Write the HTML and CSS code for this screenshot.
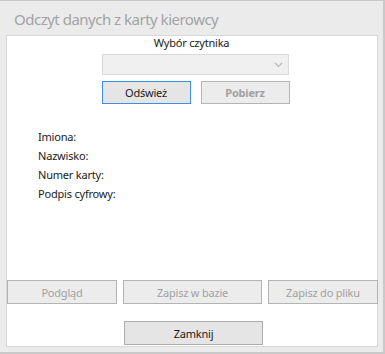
FILE: index.html
```html
<!DOCTYPE html>
<html lang="pl">
<head>
<meta charset="utf-8">
<link rel="stylesheet" href="styles.css">
</head>
<body>
<div class="window">
  <div class="title">Odczyt danych z karty kierowcy</div>
  <div class="panel">
    <div class="reader">
      <div class="reader-label">Wybór czytnika</div>
      <div class="select">
        <svg class="chevron" width="9" height="6" viewBox="0 0 9 6"><path d="M1 1 L4.5 4.5 L8 1" fill="none" stroke="#b8b8b8" stroke-width="1.2"/></svg>
      </div>
      <div class="reader-buttons">
        <button class="btn btn-focus">Odśwież</button>
        <button class="btn btn-disabled btn-bold">Pobierz</button>
      </div>
    </div>
    <div class="fields">
      <div class="field">Imiona:</div>
      <div class="field">Nazwisko:</div>
      <div class="field">Numer karty:</div>
      <div class="field">Podpis cyfrowy:</div>
    </div>
    <div class="actions">
      <button class="btn btn-disabled">Podgląd</button>
      <button class="btn btn-disabled">Zapisz w bazie</button>
      <button class="btn btn-disabled">Zapisz do pliku</button>
    </div>
    <div class="close-row">
      <button class="btn btn-close">Zamknij</button>
    </div>
  </div>
</div>
</body>
</html>
```

FILE: styles.css
```css
* { box-sizing: border-box; }
html, body { margin: 0; padding: 0; }
body {
  font-family: "Noto Sans", "Open Sans", sans-serif;
  font-size: 11px;
  letter-spacing: -0.2px;
  color: #1a1a1a;
  background: #ffffff;
}
.window {
  width: 385px;
  height: 354px;
  background: #ebebeb;
  border-top: 1px solid #c9c9c9;
  border-right: 2px solid #c9c9c9;
  border-bottom: 2px solid #c9c9c9;
  display: flex;
  flex-direction: column;
}
.title {
  height: 34px;
  padding: 6px 0 0 14px;
  font-size: 15px;
  letter-spacing: -0.5px;
  color: #a3a3a3;
  line-height: 24px;
}
.panel {
  margin-left: 6px;
  width: 372px;
  height: 312px;
  background: #ffffff;
  border: 1px solid #d8d8d8;
  display: flex;
  flex-direction: column;
  padding-bottom: 1px;
}
.reader {
  display: flex;
  flex-direction: column;
  align-items: center;
  padding-left: 7px;
}
.reader-label {
  height: 18px;
  line-height: 14px;
  margin-right: 8px;
}
.select {
  width: 187px;
  height: 21px;
  background: #f0f0f0;
  border: 1px solid #dadada;
  display: flex;
  align-items: center;
  justify-content: flex-end;
  padding-right: 5px;
}
.reader-buttons {
  display: flex;
  gap: 10px;
  margin-top: 6px;
}
.btn {
  font-family: inherit;
  font-size: 11px;
  letter-spacing: -0.2px;
  margin: 0;
  padding: 0;
  border: 1px solid #adadad;
  background: #e5e5e5;
  color: #1a1a1a;
  height: 23px;
}
.reader-buttons .btn { width: 89px; }
.btn-focus {
  border-color: #3d8ee6;
  background: #e5e5e5;
}
.btn-disabled {
  background: #ececec;
  border-color: #b4b4b4;
  color: #a2a2a2;
}
.btn-bold { font-weight: bold; }
.fields {
  padding: 25px 0 0 31px;
  display: flex;
  flex-direction: column;
}
.field {
  height: 19px;
  line-height: 16px;
}
.actions {
  margin-top: auto;
  display: grid;
  grid-template-columns: 110px 139px 110px;
  gap: 6px;
}
.actions .btn { height: 24px; }
.close-row {
  display: flex;
  justify-content: center;
  margin-top: 17px;
  padding-left: 3px;
}
.btn-close {
  width: 139px;
  height: 24px;
}
```
